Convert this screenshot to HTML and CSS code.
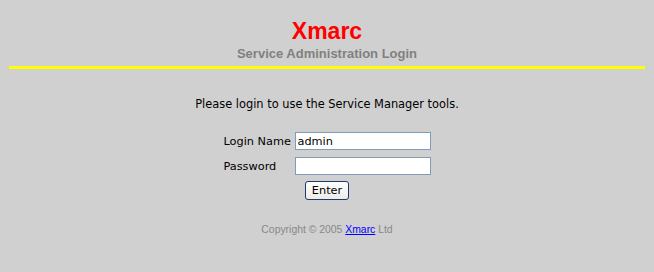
FILE: index.html
```html
<!DOCTYPE html>
<html lang="en">
<head>
    <meta charset="UTF-8">
    <title>Xmarc - Service Administration Login</title>
    <link rel="stylesheet" href="styles.css">
</head>
<body>

    <!-- Header -->
    <div class="header">
        <h1>Xmarc</h1>
        <h2>Service Administration Login</h2>
    </div>

    <!-- Login -->
    <div class="login">
        <p class="intro">Please login to use the Service Manager tools.</p>
        <form class="login-form">
            <div class="form-row">
                <label for="user">Login Name</label>
                <input type="text" id="user" name="user" value="admin">
            </div>
            <div class="form-row">
                <label for="pass">Password</label>
                <input type="password" id="pass" name="pass">
            </div>
            <div class="form-submit">
                <button type="submit">Enter</button>
            </div>
        </form>
    </div>

    <p class="copyright">Copyright &copy; 2005 <a href="#">Xmarc</a> Ltd</p>

</body>
</html>
```

FILE: styles.css
```css
body {
    margin: 0;
    padding: 0 8px;
    background-color: #d0d0d0;
    color: black;
    font-family: "DejaVu Sans", Verdana, sans-serif;
    font-size: 11px;
}

.header {
    text-align: center;
    padding-top: 18px;
    border-bottom: 3px solid #ffff00;
    margin: 0 1px;
    padding-bottom: 4px;
}

.header h1 {
    margin: 0;
    color: #ff0000;
    font-family: "Liberation Sans", Arial, sans-serif;
    font-size: 23px;
    font-weight: bold;
    line-height: 26px;
}

.header h2 {
    margin: 2px 0 0;
    color: #808080;
    font-family: "Liberation Sans", Arial, sans-serif;
    font-size: 13px;
    font-weight: bold;
    line-height: 16px;
}

.login {
    text-align: center;
}

.intro {
    margin: 28px 0 21px;
    font-size: 11.4px;
    line-height: 14px;
}

.login-form {
    display: inline-block;
    text-align: left;
}

.form-row {
    display: flex;
    align-items: center;
    margin-bottom: 7px;
}

.form-row label {
    width: 71px;
    font-size: 11.3px;
}

.form-row input {
    width: 130px;
    height: 16px;
    padding: 0 2px;
    margin: 0;
    border: 1px solid #7f9db9;
    background: white;
    font-family: "DejaVu Sans", Verdana, sans-serif;
    font-size: 11.3px;
}

.form-submit {
    text-align: center;
    margin-top: -1px;
}

.form-submit button {
    height: 19px;
    padding: 0 6px;
    border: 1px solid #1c3a6e;
    border-radius: 3px;
    background: linear-gradient(#ffffff, #ecebe6);
    color: black;
    font-family: "DejaVu Sans", Verdana, sans-serif;
    font-size: 11.3px;
}

.copyright {
    text-align: center;
    margin: 24px 0 0;
    color: #888888;
    font-family: "Liberation Sans", Arial, sans-serif;
    font-size: 10.4px;
}

.copyright a {
    color: #0000ff;
}
```
